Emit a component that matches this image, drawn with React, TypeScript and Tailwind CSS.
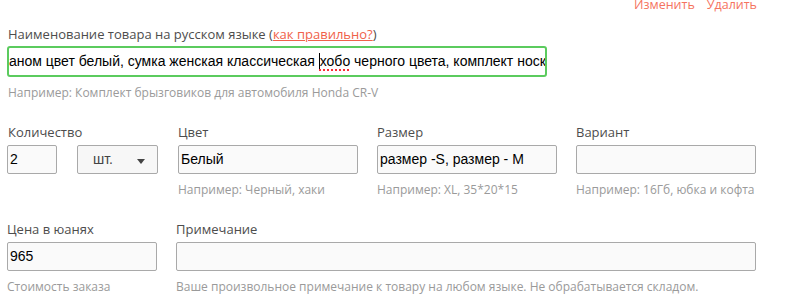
const labelCls = "text-[13px] leading-[18px] text-[#4d4d4d]";
const hintCls = "text-[12px] leading-[16px] text-[#9a9a9a]";
const inputCls =
  "h-[29px] rounded-[2px] border border-[#a9a9a9] bg-[#fafafa] px-[2px] flex items-center text-[14px] text-black font-['Liberation_Sans',Arial,sans-serif]";

function Field({ label, value, hint, width }: { label: string; value?: string; hint: string; width: string }) {
  return (
    <div className={`flex flex-col ${width}`}>
      <div className={labelCls}>{label}</div>
      <div className={`mt-[4px] ${inputCls}`}>{value}</div>
      <div className={`mt-[8px] ${hintCls}`}>{hint}</div>
    </div>
  );
}

export default function App() {
  return (
    <div className="w-[789px] h-[306px] overflow-hidden bg-white font-['Open_Sans','Noto_Sans',sans-serif] pl-[7px]">
      {/* top links */}
      <div className="-mt-[4px] flex justify-end gap-[12px] pr-[32px] text-[12.5px] leading-[18px] text-[#f5735f]">
        <span>Изменить</span>
        <span>Удалить</span>
      </div>

      {/* name */}
      <div className="mt-[11px] w-[540px]">
        <div className={`${labelCls} pl-[1px]`}>
          Наименование товара на русском языке (
          <span className="text-[#f0614a] underline">как правильно?</span>)
        </div>
        <div className="mt-[3px] h-[31px] rounded-[3px] border-2 border-[#5bcb5e] bg-white flex items-center overflow-hidden text-[14px] text-black font-['Liberation_Sans',Arial,sans-serif]">
          <span className="whitespace-pre">
            аном цвет белый, сумка женская классическая{" "}
            <span className="border-l border-black underline decoration-dotted decoration-red-500 decoration-2 underline-offset-[3px]">хобо</span>
            {" "}черного цвета, комплект носк
          </span>
        </div>
        <div className={`mt-[8px] pl-[1px] ${hintCls}`}>Например: Комплект брызговиков для автомобиля Honda CR-V</div>
      </div>

      {/* row 2 */}
      <div className="mt-[22px] flex">
        <div className="flex flex-col w-[151px]">
          <div className={`${labelCls} pl-[1px]`}>Количество</div>
          <div className="mt-[4px] flex justify-between">
            <div className={`w-[50px] ${inputCls}`}>2</div>
            <div className="w-[81px] h-[29px] rounded-[2px] border border-[#a9a9a9] bg-[#f7f7f7] flex items-center justify-between pl-[15px] pr-[12px] text-[14px] text-[#444] font-['Liberation_Sans',Arial,sans-serif]">
              <span>шт.</span>
              <svg width="8" height="5" viewBox="0 0 8 5" className="mt-[3px]">
                <path d="M0 0h8L4 5z" fill="#444" />
              </svg>
            </div>
          </div>
        </div>
        <div className="w-[20px]" />
        <Field label="Цвет" value="Белый" hint="Например: Черный, хаки" width="w-[180px]" />
        <div className="w-[19px]" />
        <Field label="Размер" value="размер -S, размер - M" hint="Например: XL, 35*20*15" width="w-[180px]" />
        <div className="w-[19px]" />
        <Field label="Вариант" hint="Например: 16Гб, юбка и кофта" width="w-[180px]" />
      </div>

      {/* row 3 */}
      <div className="mt-[22px] flex gap-[19px]">
        <Field label="Цена в юанях" value="965" hint="Стоимость заказа" width="w-[150px]" />
        <Field label="Примечание" hint="Ваше произвольное примечание к товару на любом языке. Не обрабатывается складом." width="w-[580px]" />
      </div>
    </div>
  );
}
